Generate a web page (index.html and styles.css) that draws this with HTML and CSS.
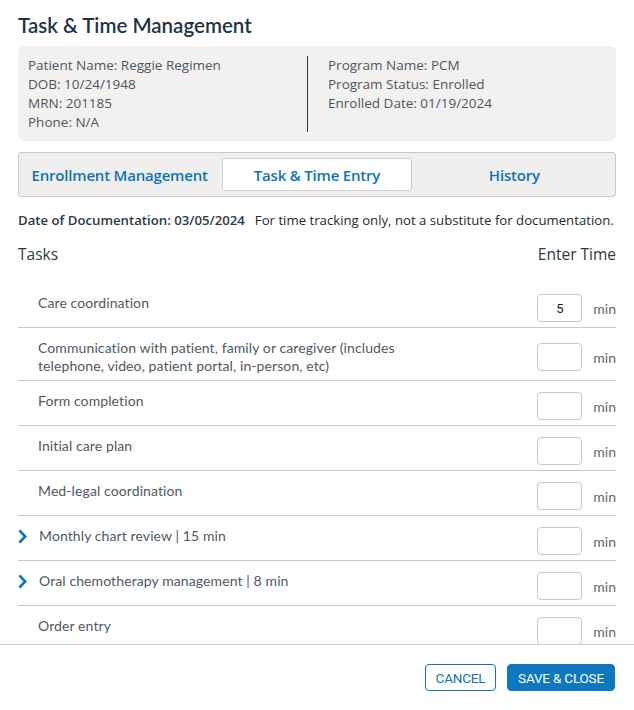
FILE: index.html
```html
<!DOCTYPE html>
<html lang="en">
  <head>
    <meta charset="UTF-8" />
    <meta name="viewport" content="width=device-width, initial-scale=1.0" />
    <title>Task &amp; Time Management</title>
    <link rel="stylesheet" href="styles.css">
  </head>
  <body>
    <div class="modal">
      <div class="content">
        <h1 class="title">Task &amp; Time Management</h1>

        <div class="patient">
          <div class="patient-col">
            <div>Patient Name: Reggie Regimen</div>
            <div>DOB: 10/24/1948</div>
            <div>MRN: 201185</div>
            <div>Phone: N/A</div>
          </div>
          <div class="patient-col program">
            <div>Program Name: PCM</div>
            <div>Program Status: Enrolled</div>
            <div>Enrolled Date: 01/19/2024</div>
          </div>
        </div>

        <div class="tabs">
          <button class="tab">Enrollment Management</button>
          <button class="tab active">Task &amp; Time Entry</button>
          <button class="tab">History</button>
        </div>

        <div class="doc-date">
          <span class="doc-label">Date of Documentation: 03/05/2024</span>
          <span class="doc-note">For time tracking only, not a substitute for documentation.</span>
        </div>

        <div class="task-head">
          <span>Tasks</span>
          <span>Enter Time</span>
        </div>

        <div class="tasks">
          <div class="task">
            <div class="task-name">Care coordination</div>
            <div class="task-time"><input class="time" type="text" value="5"><span>min</span></div>
          </div>
          <div class="task">
            <div class="task-name">Communication with patient, family or caregiver (includes<br>telephone, video, patient portal, in-person, etc)</div>
            <div class="task-time"><input class="time" type="text"><span>min</span></div>
          </div>
          <div class="task">
            <div class="task-name">Form completion</div>
            <div class="task-time"><input class="time" type="text"><span>min</span></div>
          </div>
          <div class="task">
            <div class="task-name">Initial care plan</div>
            <div class="task-time"><input class="time" type="text"><span>min</span></div>
          </div>
          <div class="task">
            <div class="task-name">Med-legal coordination</div>
            <div class="task-time"><input class="time" type="text"><span>min</span></div>
          </div>
          <div class="task">
            <div class="task-name group">
              <svg class="chevron" width="9" height="15" viewBox="0 0 9 15"><path d="M1.4 1.3 L7.2 7.5 L1.4 13.7" fill="none" stroke="#0b74b9" stroke-width="2.6"/></svg>
              Monthly chart review | 15 min
            </div>
            <div class="task-time"><input class="time" type="text"><span>min</span></div>
          </div>
          <div class="task">
            <div class="task-name group">
              <svg class="chevron" width="9" height="15" viewBox="0 0 9 15"><path d="M1.4 1.3 L7.2 7.5 L1.4 13.7" fill="none" stroke="#0b74b9" stroke-width="2.6"/></svg>
              Oral chemotherapy management | 8 min
            </div>
            <div class="task-time"><input class="time" type="text"><span>min</span></div>
          </div>
          <div class="task">
            <div class="task-name">Order entry</div>
            <div class="task-time"><input class="time" type="text"><span>min</span></div>
          </div>
        </div>
      </div>

      <div class="footer">
        <button class="btn cancel">CANCEL</button>
        <button class="btn save">SAVE &amp; CLOSE</button>
      </div>
    </div>
  </body>
</html>
```

FILE: styles.css
```css
body {
  margin: 0;
  background: #fff;
  font-family: "Lato", "Noto Sans", sans-serif;
  color: #4a5866;
}

.modal {
  width: 634px;
  height: 710px;
  display: flex;
  flex-direction: column;
}

.content {
  height: 644px;
  overflow: hidden;
  padding: 0 18px 0 18px;
  box-sizing: border-box;
}

.title {
  margin: 12px 0 8px 0;
  font-size: 20.5px;
  font-weight: 600;
  line-height: 26px;
  color: #1d3447;
}

.patient {
  display: flex;
  background: #f2f1f0;
  border-radius: 6px;
  padding: 10px 10px 9px 10px;
  font-family: "Open Sans", sans-serif;
  font-size: 13.5px;
  line-height: 19px;
}

.patient-col {
  width: 279px;
}

.program {
  flex: 1;
  border-left: 1px solid #2c3a46;
  padding-left: 20px;
}

.tabs {
  display: grid;
  grid-template-columns: repeat(3, 1fr);
  gap: 8px;
  margin-top: 11px;
  padding: 5px 6px;
  background: #f0efee;
  border: 1px solid #c9c9c9;
  border-radius: 3px;
}

.tab {
  height: 33px;
  border: 1px solid transparent;
  border-radius: 3px;
  background: none;
  font-family: "Open Sans", sans-serif;
  font-size: 15px;
  font-weight: 600;
  letter-spacing: -0.2px;
  color: #0b74b9;
  padding: 0;
}

.tab.active {
  background: #fff;
  border-color: #cfcfcf;
}

.doc-date {
  display: flex;
  gap: 10px;
  margin-top: 14px;
  font-family: "Open Sans", sans-serif;
  font-size: 13.2px;
  line-height: 18px;
  color: #1e2a33;
}

.doc-label {
  font-weight: 600;
  color: #2b3a47;
}

.task-head {
  display: flex;
  justify-content: space-between;
  margin-top: 15px;
  font-family: "Open Sans", sans-serif;
  font-size: 15.5px;
  line-height: 20px;
  color: #2b3a47;
}

.tasks {
  margin-top: 19px;
}

.task {
  display: flex;
  justify-content: space-between;
  align-items: center;
  padding: 11px 0 5px 0;
  border-bottom: 1px solid #c3cbd2;
}

.task-name {
  align-self: flex-start;
  padding-left: 20px;
  font-size: 14px;
  line-height: 18px;
  letter-spacing: 0.1px;
  color: #4d5a66;
}

.task-name.group {
  display: flex;
  align-items: center;
  gap: 12px;
  padding-left: 0;
}

.task-time {
  display: flex;
  align-items: center;
  gap: 11px;
  font-size: 14px;
  color: #5d6873;
}

.time {
  width: 45px;
  height: 28px;
  box-sizing: border-box;
  border: 1px solid #c3c9cf;
  border-radius: 4px;
  text-align: center;
  font-family: "Roboto", sans-serif;
  font-size: 13px;
  color: #222;
  padding: 0;
}

.footer {
  flex: 1;
  display: flex;
  justify-content: flex-end;
  align-items: flex-start;
  gap: 11px;
  padding: 19px 19px 0 0;
  border-top: 1px solid #c9d1d8;
}

.btn {
  height: 27px;
  padding: 0 8px;
  border-radius: 4px;
  font-family: "Roboto", sans-serif;
  font-size: 13.5px;
  letter-spacing: -0.2px;
  cursor: pointer;
}

.cancel {
  width: 71px;
  background: #fff;
  border: 1px solid #0b74b9;
  color: #0b74b9;
}

.save {
  width: 108px;
  background: #0b78c0;
  border: 1px solid #0b78c0;
  color: #fff;
}
```
